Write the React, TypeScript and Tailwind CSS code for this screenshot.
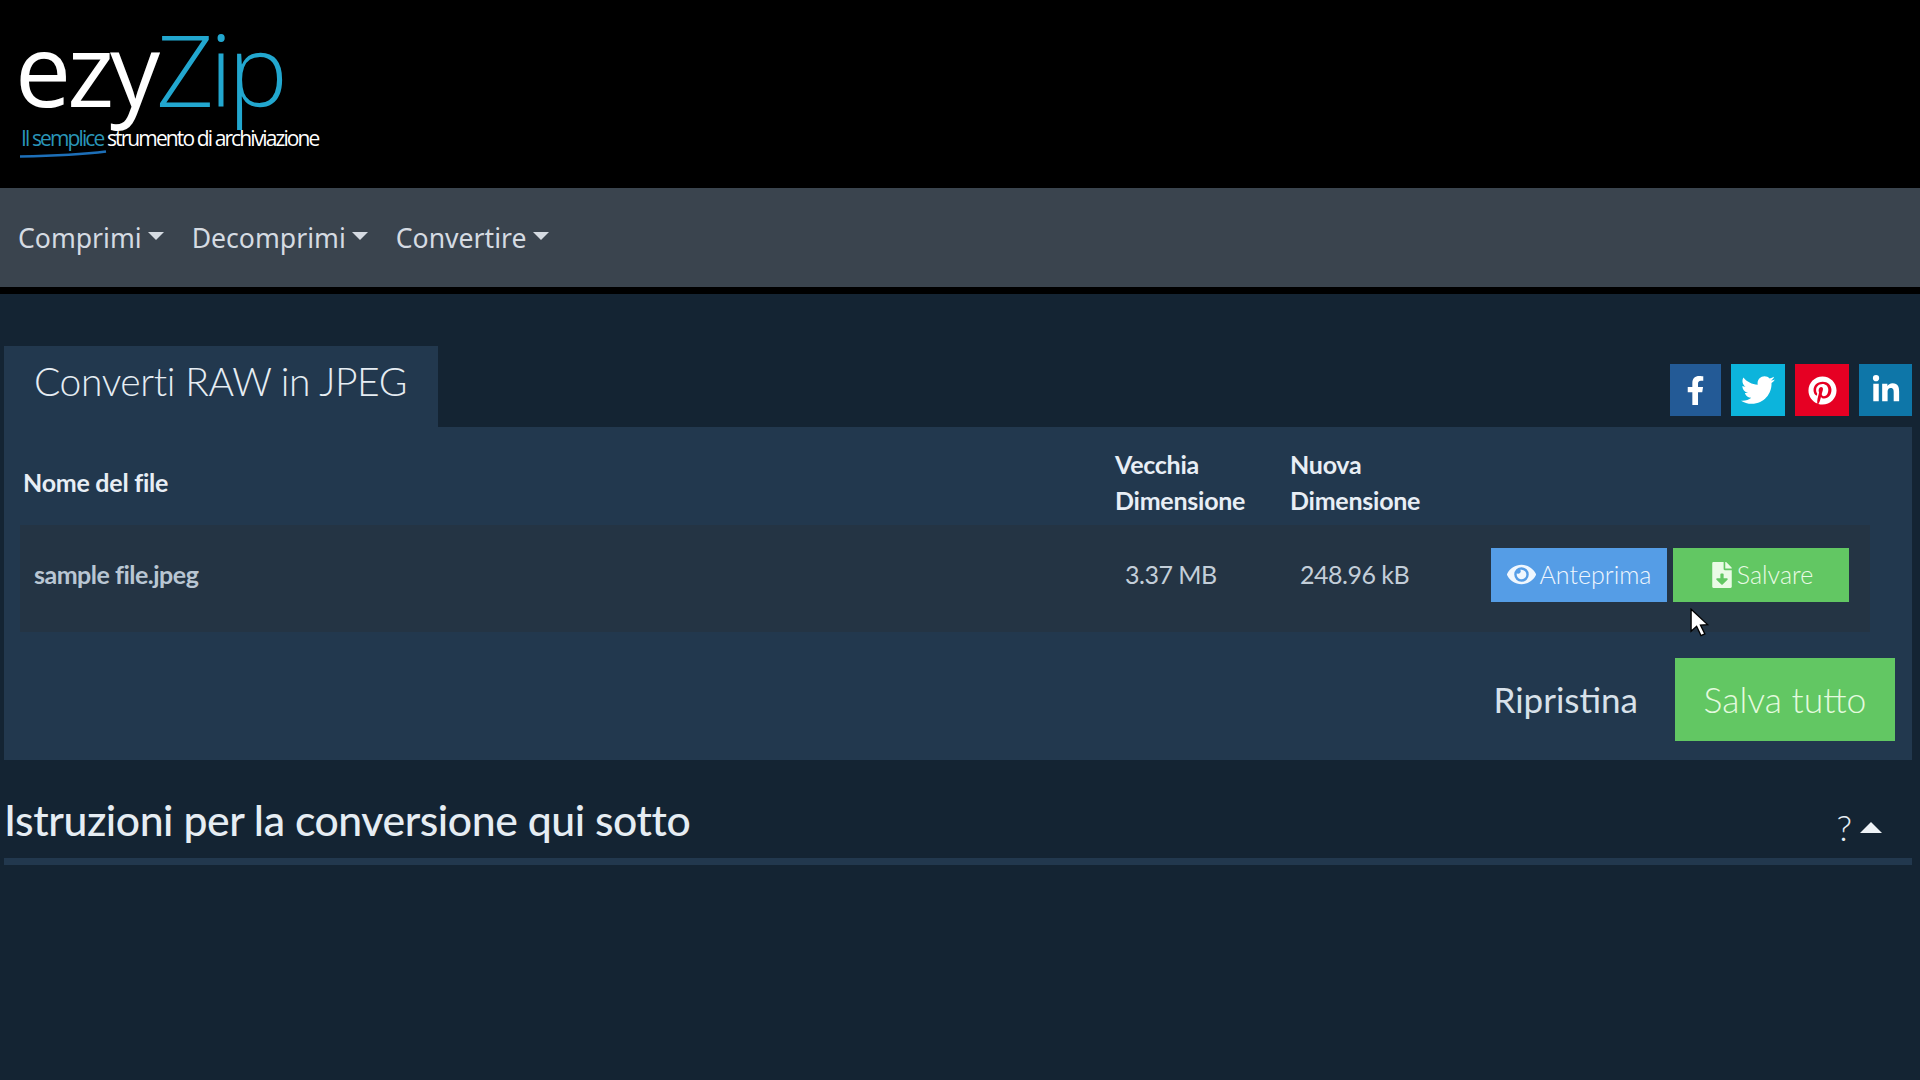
import React from "react";
import { FaFacebookF, FaTwitter, FaPinterest, FaLinkedinIn, FaEye, FaFileDownload } from "react-icons/fa";

const Caret = () => (
  <span className="ml-[6px] mt-[-5px] inline-block border-x-[8px] border-t-[8px] border-x-transparent border-t-[#d5dbe2]" />
);

const NavItem = ({ label }: { label: string }) => (
  <div className="flex items-center">
    <span>{label}</span>
    <Caret />
  </div>
);

const Social = ({ className, children }: { className: string; children: React.ReactNode }) => (
  <div className={`flex h-[52px] items-center justify-center text-white ${className}`}>{children}</div>
);

export default function App() {
  return (
    <div className="relative min-h-screen overflow-hidden bg-[#142433] font-['Lato',sans-serif] text-[#dfe6ee]">
      {/* logo */}
      <header className="h-[188px] bg-black pl-[15px] pt-[6px]">
        <div className="flex items-start font-['Open_Sans',sans-serif] text-[100px] font-light leading-[124px] tracking-[-0.04em]">
          <span className="font-normal text-white">ezy</span>
          <span className="text-[#22a7cf]">Zip</span>
        </div>
        <div className="ml-[6px] mt-[-4px] font-['Open_Sans',sans-serif] text-[21px] leading-[24px] tracking-[-0.09em]">
          <span className="text-[#2a95b8]">Il semplice </span>
          <span className="text-white">strumento di archiviazione</span>
        </div>
        <svg width="90" height="8" viewBox="0 0 90 8" className="ml-[4px] block">
          <path d="M1 6.5 C 30 6, 60 5, 87 1.5" stroke="#1d6fb8" strokeWidth="2.5" fill="none" />
        </svg>
      </header>

      {/* nav */}
      <nav className="flex h-[99px] items-center gap-[28px] bg-[#3a444e] pl-[18px] pt-[2px] font-['Noto_Sans',sans-serif] text-[26.6px] text-[#d5dbe2]">
        <NavItem label="Comprimi" />
        <NavItem label="Decomprimi" />
        <NavItem label="Convertire" />
      </nav>
      <div className="h-[7px] bg-black" />

      <main className="pt-[52px]">
        {/* tab + share */}
        <div className="flex items-start justify-between pl-[4px] pr-[8px]">
          <div className="flex h-[81px] w-[434px] items-start bg-[#22384e] pl-[30px] pt-[11px] text-[39px] font-light leading-[48px] tracking-[-0.01em] text-[#e6edf3]">
            Converti RAW in JPEG
          </div>
          <div className="mt-[18px] flex gap-[10px]">
            <Social className="w-[51px] bg-[#235a96] text-[29px]"><FaFacebookF /></Social>
            <Social className="w-[54px] bg-[#0cb4dc] text-[34px]"><FaTwitter /></Social>
            <Social className="w-[54px] bg-[#e60023] text-[29px]"><FaPinterest /></Social>
            <Social className="w-[53px] bg-[#0e76a8] text-[30px]"><FaLinkedinIn /></Social>
          </div>
        </div>

        {/* panel */}
        <section className="ml-[4px] mr-[8px] h-[333px] bg-[#22384e]">
          <div className="grid h-[98px] grid-cols-[1092px_175px_1fr] items-center pl-[19px] pt-[12px] text-[25px] font-bold leading-[36px] tracking-[-0.01em] text-[#e8eef5]">
            <div>Nome del file</div>
            <div>Vecchia<br />Dimensione</div>
            <div>Nuova<br />Dimensione</div>
          </div>
          <div className="ml-[16px] grid h-[107px] w-[1850px] grid-cols-[1091px_175px_191px_1fr] items-center bg-[#243444] pb-[8px] pl-[14px] text-[25px] leading-none tracking-[-0.02em] text-[#c3ced9]">
            <div className="font-bold text-[#b9c6d3]">sample file.jpeg</div>
            <div>3.37 MB</div>
            <div>248.96 kB</div>
            <div className="flex gap-[6px] font-light tracking-normal">
              <div className="flex h-[54px] w-[176px] items-center justify-center gap-[4px] bg-[#559de6] text-[#f0f7fe]">
                <FaEye className="text-[29px]" />
                <span>Anteprima</span>
              </div>
              <div className="flex h-[54px] w-[176px] items-center justify-center gap-[2px] bg-[#62c763] text-[#eafbe6]">
                <FaFileDownload className="text-[26px]" />
                <span>Salvare</span>
              </div>
            </div>
          </div>
          <div className="mt-[26px] flex items-center justify-end pr-[17px]">
            <span className="mr-[37px] text-[35px] text-[#d8e1ea]">Ripristina</span>
            <div className="flex h-[83px] w-[220px] items-center justify-center bg-[#62c763] text-[35.5px] font-light text-[#e4fadf]">
              Salva tutto
            </div>
          </div>
        </section>

        {/* instructions heading */}
        <div className="mx-[4px] mr-[8px] flex h-[98px] items-center justify-between pr-[30px] pt-[22px]">
          <h2 className="text-[42.7px] font-medium tracking-[-0.01em] text-[#e6edf3]">Istruzioni per la conversione qui sotto</h2>
          <div className="mt-[14px] flex items-center gap-[8px]">
            <span className="text-[36px] font-light leading-none text-[#e6edf3]">?</span>
            <span className="inline-block border-x-[11px] border-b-[11px] border-x-transparent border-b-[#eef2f6]" />
          </div>
        </div>
        <div className="ml-[4px] mr-[8px] h-[7px] bg-[#22384e]" />
      </main>

      {/* mouse cursor */}
      <svg width="22" height="31" viewBox="0 0 20 28" className="absolute left-[1690px] top-[608px]">
        <path d="M1 1 L1 21 L6 16.5 L10 25 L13.5 23.5 L9.5 15.5 L16 15 Z" fill="#fff" stroke="#000" strokeWidth="1.2" />
      </svg>
    </div>
  );
}
